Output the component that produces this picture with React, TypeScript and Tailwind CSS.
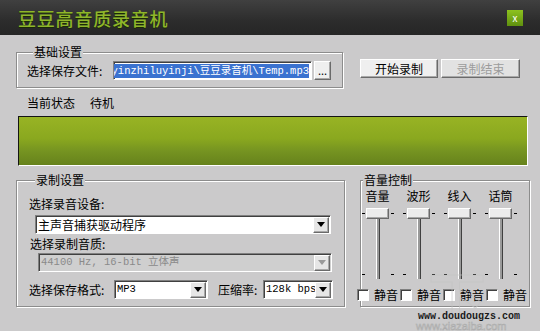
import { clsx } from 'clsx'

const sunken =
  'border border-t-[#808080] border-l-[#808080] border-b-white border-r-white shadow-[inset_1px_1px_0_#404040]'
const raised =
  'border border-t-white border-l-white border-b-[#6a6a6a] border-r-[#6a6a6a] shadow-[inset_-1px_-1px_0_#a8a8a8]'
const groupBox =
  'border border-[#8c8c8c] shadow-[inset_1px_1px_0_#ffffff,1px_1px_0_#ffffff]'

function ArrowButton({ disabled }: { disabled?: boolean }) {
  return (
    <div
      className={clsx(
        'w-[16px] h-[16px] flex items-center justify-center bg-[#e6e6e6] shrink-0',
        raised
      )}
    >
      <svg width="8" height="5" viewBox="0 0 8 5">
        <path d="M0 0h8L4 5z" fill={disabled ? '#9a9a9a' : '#000'} />
      </svg>
    </div>
  )
}

function Select({
  value,
  width,
  disabled,
  mono,
}: {
  value: string
  width: string
  disabled?: boolean
  mono?: boolean
}) {
  return (
    <div
      className={clsx(
        'h-[19px] flex items-center pl-[2px] pr-[1px]',
        sunken,
        width,
        disabled ? 'bg-[#cfcfcf]' : 'bg-white'
      )}
    >
      <span
        className={clsx(
          'flex-1 whitespace-nowrap overflow-hidden leading-[15px]',
          mono ? 'font-["Liberation_Mono","Noto_Sans_CJK_SC",monospace] text-[10.5px]' : 'text-[12px]',
          disabled ? 'text-[#8a8a8a]' : 'text-black'
        )}
      >
        {value}
      </span>
      <ArrowButton disabled={disabled} />
    </div>
  )
}

function Slider({ label }: { label: string }) {
  return (
    <div className="w-[41px] flex flex-col items-center">
      <span className="text-[12px] leading-[16px] h-[16px]">{label}</span>
      <div className="relative w-full h-[78px]">
        <div className="absolute left-[5px] top-[9px] w-[3px] h-px bg-black" />
        <div className="absolute left-[34px] top-[9px] w-[3px] h-px bg-black" />
        <div className="absolute left-[5px] top-[70px] w-[3px] h-px bg-black" />
        <div className="absolute left-[34px] top-[70px] w-[3px] h-px bg-black" />
        <div className="absolute left-[19px] top-[15px] w-[4px] h-[60px] border-l border-l-white border-r border-r-[#404040] bg-[#9a9a9a]" />
        <div
          className={clsx('absolute left-[9px] top-[4px] w-[23px] h-[11px] bg-[#ececec]', raised)}
        />
      </div>
    </div>
  )
}

function Mute() {
  return (
    <div className="w-[43px] flex items-center gap-[5px] shrink-0">
      <div className={clsx('w-[12px] h-[12px] bg-white shrink-0', sunken)} />
      <span className="text-[12px] leading-[16px]">静音</span>
    </div>
  )
}

export default function App() {
  return (
    <div className='w-[540px] h-[331px] overflow-hidden relative bg-[#cbcacb] text-black font-["Noto_Sans_CJK_SC",sans-serif] text-[12px]'>
      {/* title bar */}
      <div className="h-[35px] flex items-center justify-between pl-[18px] pr-[17px] bg-[linear-gradient(to_bottom,#404040,#2c2c2c_60%,#262626)]">
        <span className="text-[18px] leading-[20px] tracking-[0.8px] font-medium text-[#8fb62a] [text-shadow:0_1px_0_#1a2a05]">
          豆豆高音质录音机
        </span>
        <div className="w-[16px] h-[16px] flex items-center justify-center text-white text-[10px] leading-none bg-[linear-gradient(to_bottom,#8dc21f,#5f900f)]">
          x
        </div>
      </div>

      <div className="pl-[16px]">
        {/* basic settings row */}
        <div className="flex items-start mt-[9px]">
          <fieldset className={clsx('w-[327px] h-[44px] pl-[10px] pr-[11px]', groupBox)}>
            <legend className="ml-[6px] px-[1px] leading-[16px] bg-[#cbcacb]">基础设置</legend>
            <div className="flex items-center mt-[1px]">
              <span className="w-[86px] leading-[16px]">选择保存文件:</span>
              <div
                className={clsx(
                  'w-[199px] h-[19px] bg-white flex items-center justify-end overflow-hidden pr-[2px]',
                  sunken
                )}
              >
                <span className='whitespace-nowrap bg-[#3a72d0] text-white leading-[14px] font-["Liberation_Mono","Noto_Sans_CJK_SC",monospace] text-[10.5px]'>
                  C:\gaoyinzhiluyinji\豆豆录音机\Temp.mp3
                </span>
              </div>
              <div
                className={clsx(
                  'ml-[2px] w-[17px] h-[19px] bg-[#efefef] flex items-center justify-center leading-none text-[11px]',
                  raised
                )}
              >
                ...
              </div>
            </div>
          </fieldset>
          <div className="flex gap-[3px] ml-[17px] mt-[15px]">
            <div
              className={clsx(
                'w-[78px] h-[19px] bg-[#efefef] flex items-center justify-center leading-none',
                raised
              )}
            >
              开始录制
            </div>
            <div
              className={clsx(
                'w-[79px] h-[19px] bg-[#e2e2e2] flex items-center justify-center leading-none text-[#9c9c9c]',
                raised
              )}
            >
              录制结束
            </div>
          </div>
        </div>

        {/* status */}
        <div className="flex gap-[15px] pl-[11px] mt-[7px] leading-[16px]">
          <span>当前状态</span>
          <span>待机</span>
        </div>
        <div className="ml-[2px] mt-[5px] w-[510px] h-[50px] border border-t-[#141414] border-l-[#141414] border-b-white border-r-white bg-[linear-gradient(to_bottom,#98b324,#8aa81f_45%,#769421_70%,#66821c)]" />

        {/* bottom panels */}
        <div className="flex items-start mt-[6px]">
          <fieldset className={clsx('w-[327px] h-[135px] pl-[12px] pr-[11px]', groupBox)}>
            <legend className="ml-[6px] px-[1px] leading-[16px] bg-[#cbcacb]">录制设置</legend>
            <div className="leading-[16px] mt-[8px]">选择录音设备:</div>
            <div className="pl-[6px] mt-[3px]">
              <Select value="主声音捕获驱动程序" width="w-[296px]" />
            </div>
            <div className="leading-[16px] mt-[2px] pl-[1px]">选择录制音质:</div>
            <div className="pl-[9px] mt-[1px]">
              <Select value="44100 Hz, 16-bit 立体声" width="w-[294px]" disabled mono />
            </div>
            <div className="flex items-center mt-[8px]">
              <span className="w-[85px] leading-[16px]">选择保存格式:</span>
              <Select value="MP3" width="w-[94px]" mono />
              <span className="ml-[10px] w-[45px] leading-[16px]">压缩率:</span>
              <Select value="128k bps" width="w-[70px]" mono />
            </div>
          </fieldset>

          <fieldset className={clsx('ml-[15px] w-[170px] h-[135px] pl-0 pr-0', groupBox)}>
            <legend className="ml-[2px] px-[1px] leading-[16px] bg-[#cbcacb]">音量控制</legend>
            <div className="ml-[-4px] flex">
              <Slider label="音量" />
              <Slider label="波形" />
              <Slider label="线入" />
              <Slider label="话筒" />
            </div>
            <div className="ml-[-4px] mt-[5px] flex">
              <Mute />
              <Mute />
              <Mute />
              <Mute />
            </div>
          </fieldset>
        </div>
      </div>

      {/* watermarks */}
      <span className="absolute left-[428px] top-[266px] text-[58px] leading-none font-bold text-transparent [-webkit-text-stroke:1px_#c4c4c4] opacity-60 pointer-events-none">
        下载吧
      </span>
      <span className='absolute left-[418px] top-[311px] font-["Liberation_Mono",monospace] text-[10px] leading-[12px] text-[#1a1a1a] font-bold'>
        www.doudougzs.com
      </span>
      <span className='absolute left-[416px] top-[321px] font-["Liberation_Sans",sans-serif] text-[11px] leading-[10px] text-transparent [-webkit-text-stroke:0.5px_#aaaaaa]'>
        www.xiazaiba.com
      </span>
    </div>
  )
}
